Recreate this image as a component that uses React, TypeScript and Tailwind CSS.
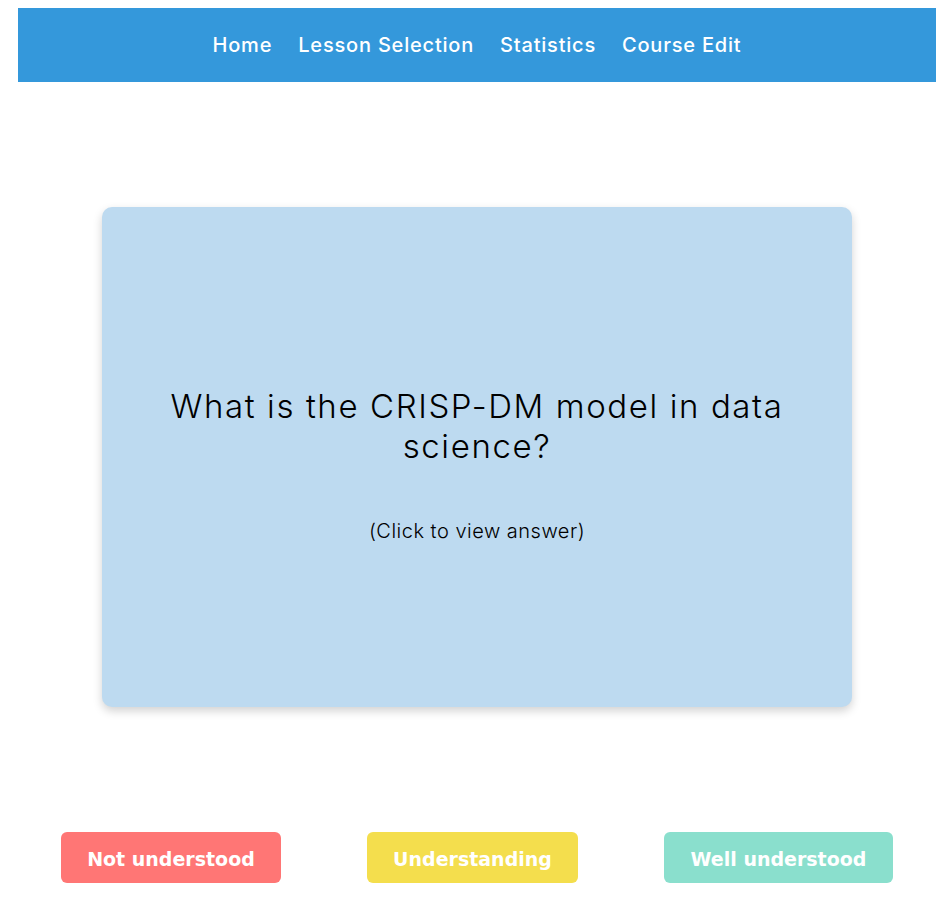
import React from "react";

export default function App() {
  const font = { fontFamily: "Inter, 'Noto Sans', sans-serif" };
  return (
    <div className="w-[947px] min-h-[900px] bg-white pt-[8px]" style={font}>
      <nav className="ml-[18px] w-[918px] h-[74px] bg-[#3498db] flex items-center justify-center gap-[26px] text-white text-[20px] font-medium tracking-[0.8px]">
        <span>Home</span>
        <span>Lesson Selection</span>
        <span>Statistics</span>
        <span>Course Edit</span>
      </nav>
      <div className="mt-[125px] ml-[102px] w-[750px] h-[500px] rounded-[10px] bg-[#bddaf0] shadow-[0_4px_10px_rgba(0,0,0,0.18)] flex flex-col items-center justify-center px-[40px] pt-[14px] text-black">
        <h2 className="text-[33px] leading-[40px] font-light tracking-[1.6px] text-center">
          What is the CRISP-DM model in data science?
        </h2>
        <p className="mt-[53px] text-[20px] leading-[24px] font-light tracking-[0.5px]">(Click to view answer)</p>
      </div>
      <div
        className="mt-[125px] ml-[18px] w-[918px] flex justify-around text-white text-[19px] font-bold"
        style={{ fontFamily: "Verdana, 'DejaVu Sans', sans-serif" }}
      >
        <button className="w-[220px] h-[51px] pt-[3px] rounded-[6px] bg-[#ff7675]">Not understood</button>
        <button className="w-[211px] h-[51px] pt-[3px] rounded-[6px] bg-[#f4de4d]">Understanding</button>
        <button className="w-[229px] h-[51px] pt-[3px] rounded-[6px] bg-[#8adfcd]">Well understood</button>
      </div>
    </div>
  );
}
